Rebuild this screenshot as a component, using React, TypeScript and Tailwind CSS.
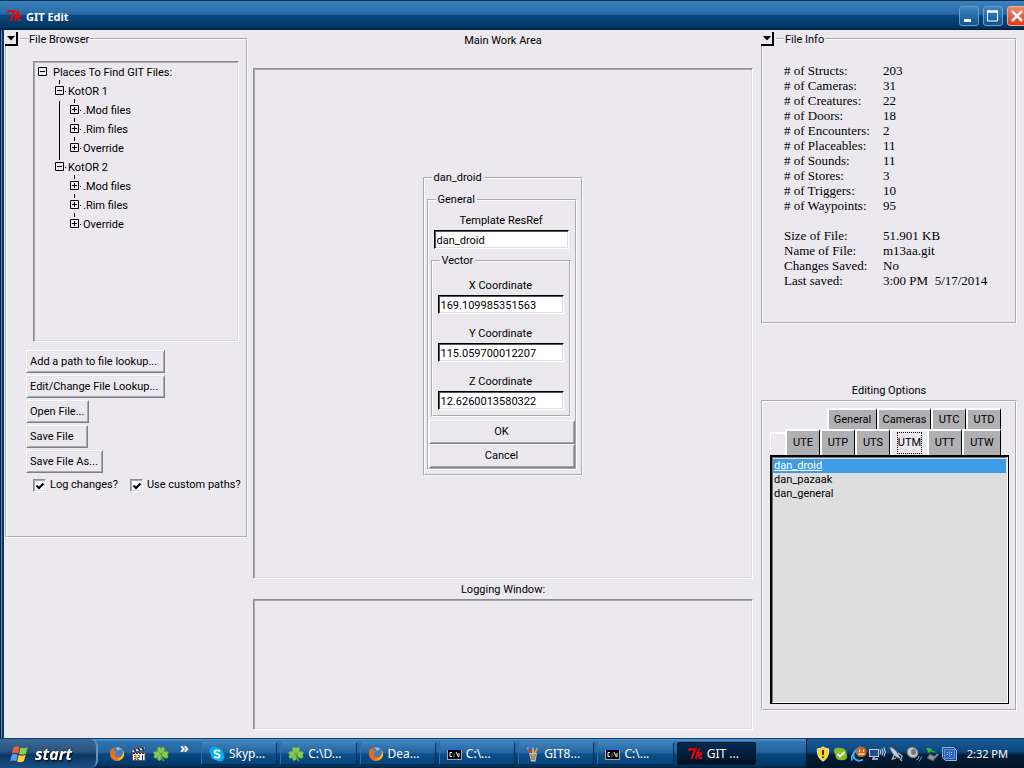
import { useState } from "react";
import type { ReactNode } from "react";

const sunken =
  "border border-t-[#8d8c92] border-l-[#8d8c92] border-r-white border-b-white shadow-[inset_1px_1px_#a9a8ad,inset_-1px_-1px_#dddce1]";
const raised =
  "border border-t-white border-l-white border-r-[#7f8186] border-b-[#7f8186] bg-[#ebe9ed] shadow-[inset_1px_1px_#e0e3e8,inset_-1px_-1px_#a9a8ad] active:border-t-[#8d8c92] active:border-l-[#8d8c92]";
const groove = "border-2 border-white [border-style:groove]";

const fileTree = [
  { name: "KotOR 1", children: [".Mod files", ".Rim files", "Override"] },
  { name: "KotOR 2", children: [".Mod files", ".Rim files", "Override"] },
];

const fileInfo = [
  ["# of Structs:", "203"],
  ["# of Cameras:", "31"],
  ["# of Creatures:", "22"],
  ["# of Doors:", "18"],
  ["# of Encounters:", "2"],
  ["# of Placeables:", "11"],
  ["# of Sounds:", "11"],
  ["# of Stores:", "3"],
  ["# of Triggers:", "10"],
  ["# of Waypoints:", "95"],
  ["", ""],
  ["Size of File:", "51.901 KB"],
  ["Name of File:", "m13aa.git"],
  ["Changes Saved:", "No"],
  ["Last saved:", "3:00 PM  5/17/2014"],
];

const FeatherIcon = () => (
  <svg width="15" height="12" viewBox="0 0 15 12" fill="none" stroke="#f00" className="shrink-0">
    <path d="M0.500 3 1.500 1.200H7.500C6 4 4.500 7 3.500 11" strokeWidth="1.900" />
    <path d="M11.500 0.500C10 3.500 8.500 7.500 7.800 11" strokeWidth="1.700" />
    <path d="M9 7.500c2-3 4.500-3.500 4.500-2S11 7.500 10 7.500c1 .5 1 2.500 2 3 .8.300 1.500-.5 2-1.500" strokeWidth="1.300" />
  </svg>
);

const SkypeIcon = () => (
  <svg width="16" height="16" viewBox="0 0 16 16" className="shrink-0">
    <circle cx="5" cy="5" r="4.500" fill="#00aff0" />
    <circle cx="11" cy="11" r="4.500" fill="#00aff0" />
    <circle cx="8" cy="8" r="6.500" fill="#00aff0" />
    <path d="M10.800 5.400C9.500 3.800 5.500 4 5.500 6c0 2.400 5.200 1.400 5.200 3.900 0 2.200-4.200 2.300-5.500.5" fill="none" stroke="#fff" strokeWidth="1.900" />
  </svg>
);

const CloverIcon = () => (
  <svg width="16" height="16" viewBox="0 0 16 16" className="shrink-0">
    <path d="M8 8c0 3 1 5 3 7" stroke="#5d9f2f" strokeWidth="1.600" fill="none" />
    <g fill="#86c850" stroke="#5fa636" strokeWidth="0.500">
      <path d="M8 7.500C4.500 6.500 3.500 3.500 5 1.500c1.500-1 2.500 0 3 1 .5-1 1.700-2 3-1 1.500 2 .5 5-3 6z" />
      <path d="M7.500 8C6 5 3 4.500 1 6c-1 1.500 0 2.200.8 2.700C.8 9.300.5 10.700 1.500 12c2.500 1 5-1 6-4z" />
      <path d="M8.500 8C10 5 13 4.500 15 6c1 1.500 0 2.200-.8 2.700 1 .6 1.300 2 .3 3.300-2.500 1-5-1-6-4z" />
      <path d="M8 8c-3 1-4 3.500-3 6 1.200 1 2.400.4 3-.5z" />
    </g>
  </svg>
);

const FirefoxIcon = () => (
  <svg width="16" height="16" viewBox="0 0 16 16" className="shrink-0">
    <circle cx="8" cy="8" r="7" fill="#e8701a" />
    <circle cx="9" cy="6.500" r="5" fill="#3c7fc4" />
    <path d="M7 2c2-1 5 0 6 2-2-1-3 0-4 1z" fill="#8fc3ec" />
    <path d="M1.500 3C.5 8 2 14 8 15c4 0 7-3 7-7 0-1-.3-3-1-4 .3 4-1 7-5 7-3 0-4-2-3-4l2-1C7 4.500 5 5 4.500 5 4 4 4 3 4.500 2 3.500 2.500 3 3 2.500 4z" fill="#e8701a" />
    <path d="M14 5c.5 4-2 8-6 8 3 2 7-1 7-5 0-1-.5-2.500-1-3z" fill="#fbc62f" />
  </svg>
);

const ConsoleIcon = () => (
  <svg width="15" height="12" viewBox="0 0 15 12" className="shrink-0">
    <rect width="15" height="12" fill="#9aa5b3" />
    <rect width="15" height="2" fill="#2b6ad0" />
    <rect x="1" y="2" width="13" height="9" fill="#000" />
    <path d="M5 4.500H3v4h2M7 5.500v1M7 7.500v1M9 4l2.500 5M12 5v3.500" stroke="#fff" fill="none" />
  </svg>
);

const BrushesIcon = () => (
  <svg width="14" height="16" viewBox="0 0 14 16" className="shrink-0">
    <path d="M5 9 2 2" stroke="#d5402b" strokeWidth="2" />
    <path d="M7 9V2" stroke="#e9a63a" strokeWidth="2" />
    <path d="m8 9 3.500-7" stroke="#c79a55" strokeWidth="2" />
    <path d="M1 3.500 2.500 1M7 1v2" stroke="#5aa0e8" strokeWidth="2" />
    <path d="M3 7h8l-1.500 8.500H5z" fill="#b9cbd8" />
    <path d="M5 8l1 6M9 8l-1 6" stroke="#c46a3a" strokeWidth="1.500" />
    <path d="M7 8v6" stroke="#6f9a3e" />
  </svg>
);

const ClapperIcon = () => (
  <svg width="14" height="14" viewBox="0 0 14 14" className="shrink-0">
    <path d="M0 3 13 0v2.500L0 5.500z" fill="#fff" stroke="#222" strokeWidth="0.600" />
    <path d="m2 2.500 2 2M6 1.500l2 2M10 .7l2 2" stroke="#111" strokeWidth="1.500" />
    <rect x="0.500" y="5.500" width="12.500" height="8" fill="#fff" stroke="#555" />
    <path d="M1 6.500h12" stroke="#222" strokeDasharray="2 1" />
    <path d="M2 8.500h2v4H2M2 10.500h2" stroke="#d22" fill="none" />
    <path d="M5.500 8.500h2V10.500h-2v2h2" stroke="#282" fill="none" />
    <path d="M10.500 8v5" stroke="#22c" />
  </svg>
);

const WindowsLogo = () => (
  <svg width="19" height="18" viewBox="0 0 19 18" className="shrink-0">
    <path d="M3.500 2.500C5.500 1 7.500 1 9.500 2L8 8.500C6 7.500 4 7.500 2 8.500z" fill="#f0622d" />
    <path d="M10.500 2.500c2 1 4.500 1 7-.5L16 8.500c-2.500 1.500-4.500 1.500-7 .5z" fill="#8fd04a" />
    <path d="M1.700 9.700c2-1 4-1 6 0l-1.500 6.500c-2-1-4-1-6 0z" fill="#5a9bf5" />
    <path d="M8.700 10c2.500 1 4.500 1 7-.5L14 16c-2.500 1.500-4.500 1.500-7 .500z" fill="#fbd335" />
  </svg>
);

const TrayIcons = () => (
  <div className="flex items-center gap-[2px]">
    <svg width="16" height="16" viewBox="0 0 16 16">
      <path d="M8 .8C6 2.300 4 2.800 2.300 2.800c0 6 1 9.500 5.700 12.400 4.700-2.900 5.700-6.400 5.700-12.400C12 2.800 10 2.300 8 .8z" fill="#f9d423" stroke="#e9e9dd" />
      <path d="M8 4v5M8 10.500V12" stroke="#222" strokeWidth="1.800" />
    </svg>
    <svg width="16" height="16" viewBox="0 0 16 16">
      <path d="M1 5c0-3 3-4.500 6-3 4-.5 7 2.500 6.500 6 2 3-.5 7-4.500 6-4 1-7-2-6.500-5.500C1.500 7.500 1 6 1 5z" fill="#84bd27" />
      <path d="m4.500 8 2.500 2.500L11.500 6" stroke="#fff" strokeWidth="1.900" fill="none" />
    </svg>
    <svg width="16" height="16" viewBox="0 0 16 16">
      <path d="M12 13.500C8 16 2.500 14 2.500 9.500 2.500 6 5 4 7 4M1 14.500C-.5 11 4 3 10 1" fill="none" stroke="#35aef0" strokeWidth="2" />
      <rect x="5" y="1" width="10.500" height="10" rx="4.500" fill="#c9621c" />
      <path d="M8.500 3.500V6M12.500 3.500V6M7.500 8h6" stroke="#f8e3c8" strokeWidth="1.300" />
    </svg>
    <svg width="17" height="16" viewBox="0 0 17 16">
      <rect x="0.500" y="3.500" width="9" height="7" fill="#2a4a8c" stroke="#b9c7df" />
      <path d="M3 13h6M5 11v2" stroke="#b9c7df" strokeWidth="1.500" />
      <path d="M11 3.500q1.500 2.500 0 5M13 2.500q2 3.500 0 7M15 1.500q2.500 4.500 0 9" stroke="#dfe6f2" fill="none" />
    </svg>
    <svg width="16" height="16" viewBox="0 0 16 16">
      <path d="M1.500 1C5 1.500 8 4 10 8l3 5-4-1.500C6 9.500 3 6 1.500 1z" fill="#c9ced5" stroke="#5b6471" strokeWidth="0.600" />
      <path d="m6 9-1.500 4L8 12M10 7l4 3-.5 3M12 13l2 2" stroke="#b5bcc5" strokeWidth="1.300" fill="none" />
    </svg>
    <svg width="16" height="16" viewBox="0 0 16 16">
      <ellipse cx="6.500" cy="6.500" rx="5.500" ry="4.800" transform="rotate(35 6.500 6.500)" fill="#c9c9c9" stroke="#8a8a8a" />
      <ellipse cx="7.500" cy="6" rx="2.500" ry="3" fill="#7a7a7a" />
      <path d="M10 14q3-1 3-4M12.500 15.500q3-2 3-5" stroke="#7f95d2" fill="none" />
    </svg>
    <svg width="16" height="16" viewBox="0 0 16 16">
      <path d="m6 8 6 3-3 4-6-3z" fill="#8d949b" stroke="#4b535b" />
      <path d="m11 11 3-3" stroke="#8a9096" strokeWidth="2" />
      <path d="M13 6C10 7 8 6 7 5L5 7.500 2 2l6 .5-1 1C8.500 5 10.500 6 13 6z" fill="#2fc235" />
    </svg>
    <svg width="16" height="16" viewBox="0 0 16 16">
      <path d="M0.500 1.500h11l3 3v10h-11l-3-3z" fill="#1d4f9c" stroke="#8fb4e6" />
      <path d="M2.500 3.500h10v9h-10z" fill="#2b65b5" stroke="#5f90d2" />
      <path d="M5.500 6v4M7.500 5.500v5M9.500 6v4" stroke="#b8d3f5" strokeDasharray="1 1" />
    </svg>
  </div>
);

const tasks = [
  { icon: <SkypeIcon />, label: "Skyp..." },
  { icon: <CloverIcon />, label: "C:\\D..." },
  { icon: <FirefoxIcon />, label: "Dea..." },
  { icon: <ConsoleIcon />, label: "C:\\..." },
  { icon: <BrushesIcon />, label: "GIT8..." },
  { icon: <ConsoleIcon />, label: "C:\\..." },
  { icon: <FeatherIcon />, label: "GIT ...", active: true },
];

const TitleBar = () => (
  <header className="flex h-[30px] items-center justify-between overflow-hidden border-t border-[#062c50] bg-[linear-gradient(#3a83bd,#2a6aa5_45%,#064a84_50%,#02365f_90%,#011f3a)] pl-[7px]">
    <div className="flex items-center gap-1">
      <FeatherIcon />
      <h1 className="pt-[2px] font-['Noto_Sans'] text-[11px] font-bold text-white">GIT Edit</h1>
    </div>
    <div className="-mr-[3px] flex gap-1">
      <button aria-label="Minimize" className="h-5 w-5 rounded-[3px] border border-[#6a9fcb] bg-[linear-gradient(#3f86c0,#0f5490)]">
        <svg width="18" height="18" viewBox="0 0 18 18"><path d="M4 13.500h7" stroke="#fff" strokeWidth="3" /></svg>
      </button>
      <button aria-label="Maximize" className="h-5 w-5 rounded-[3px] border border-[#6a9fcb] bg-[linear-gradient(#3f86c0,#0f5490)]">
        <svg width="18" height="18" viewBox="0 0 18 18"><path d="M3.500 4v10h10V4" stroke="#fff" fill="none" /><path d="M3 4.500h11" stroke="#fff" strokeWidth="2.500" /></svg>
      </button>
      <button aria-label="Close" className="h-5 w-5 rounded-[3px] border border-[#f3a993] bg-[linear-gradient(#ee8a6a,#dc3c18)]">
        <svg width="18" height="18" viewBox="0 0 18 18"><path d="m4 4 10 10M14 4 4 14" stroke="#fff" strokeWidth="2.500" /></svg>
      </button>
    </div>
  </header>
);

// Group box with the little drop-down arrow in its top left corner
const CollapsiblePanel = ({ title, children }: { title: string; children: ReactNode }) => (
  <fieldset className={groove}>
    <legend className="-ml-[2px] flex h-[14px] items-center">
      <button aria-label={`Toggle ${title}`} className="flex h-[14px] w-[13px] items-center justify-center border-r-2 border-b-2 border-black bg-[#ebe9ed]">
        <svg width="8" height="5" viewBox="0 0 8 5"><path d="M0 0h8L4 4.500z" /></svg>
      </button>
      <span className="ml-[2px] h-[2px] w-2 border-t border-b border-t-[#b1b0b4] border-b-white" />
      <span className="px-[1px] pt-[2px]">{title}</span>
    </legend>
    {children}
  </fieldset>
);

const Expander = ({ open, linked }: { open: boolean; linked?: boolean }) => (
  <svg width="11" height="19" viewBox="0 0 11 19" fill="none" stroke="#000" className="shrink-0 overflow-visible">
    {linked && <path d="M4.500 -2V2M10 9.500h1" />}
    <path d="M0.500 4.500h8v8h-8zM2 8.500h5" />
    {!open && <path d="M4.500 6v5" />}
  </svg>
);

const FileTree = () => {
  const [open, setOpen] = useState<Record<string, boolean>>({ "KotOR 1": true, "KotOR 2": true });

  return (
    <div className={`ml-[26px] mr-[7px] mt-[15px] h-[281px] pl-1 pt-px leading-4 ${sunken}`}>
      <div className="flex h-[19px] items-center gap-1">
        <Expander open />
        <span className="pt-px">Places To Find GIT Files:</span>
      </div>
      <ul className="pl-[17px]">
        {fileTree.map((node, i) => (
          <li key={node.name}>
            <button
              className="flex h-[19px] items-center gap-[2px]"
              onClick={() => setOpen({ ...open, [node.name]: !open[node.name] })}
            >
              <Expander open={open[node.name]} linked />
              <span className="pt-px">{node.name}</span>
            </button>
            {open[node.name] && (
              <ul className={`ml-1 border-l pl-[10px] ${i === 0 ? "border-black" : "border-transparent"}`}>
                {node.children.map((child) => (
                  <li key={child}>
                    <button className="flex h-[19px] items-center gap-[2px]">
                      <Expander open={false} linked />
                      <span className="pt-px">{child}</span>
                    </button>
                  </li>
                ))}
              </ul>
            )}
          </li>
        ))}
      </ul>
    </div>
  );
};

const CheckBox = ({ label }: { label: string }) => (
  <label className="flex items-center gap-1">
    <span className="relative flex">
      <input type="checkbox" defaultChecked className={`peer h-[13px] w-[13px] appearance-none bg-white ${sunken}`} />
      <svg width="8" height="8" viewBox="0 0 8 8" className="pointer-events-none absolute left-[3px] top-[3px] hidden peer-checked:block">
        <path d="M0.500 3.500 3 6l4.500-4.500" stroke="#000" strokeWidth="2.200" fill="none" />
      </svg>
    </span>
    {label}
  </label>
);

const FileBrowser = () => (
  <CollapsiblePanel title="File Browser">
    <FileTree />
    <div className="ml-[19px] mt-2 flex flex-col items-start gap-[2px]">
      <button className={`h-[23px] w-[139px] px-[3px] pt-px text-left ${raised}`}>Add a path to file lookup...</button>
      <button className={`h-[23px] w-[139px] px-[3px] pt-px text-left ${raised}`}>Edit/Change File Lookup...</button>
      <button className={`h-[23px] w-[63px] px-[3px] pt-px text-left ${raised}`}>Open File...</button>
      <button className={`h-[23px] w-[62px] px-[3px] pt-px text-left ${raised}`}>Save File</button>
      <button className={`h-[23px] w-[77px] px-[3px] pt-px text-left ${raised}`}>Save File As...</button>
    </div>
    <div className="mb-[44px] ml-[26px] mt-[5px] flex gap-3">
      <CheckBox label="Log changes?" />
      <CheckBox label="Use custom paths?" />
    </div>
  </CollapsiblePanel>
);

const Field = ({ label, value }: { label: string; value: string }) => (
  <label className="flex flex-col">
    <span className="text-center leading-[18px]">{label}</span>
    <input
      defaultValue={value}
      className="h-[19px] w-full border border-t-black border-l-black border-r-white border-b-white bg-white px-[2px] pt-px shadow-[inset_1px_1px_#555,inset_-1px_-1px_#dedede]"
    />
  </label>
);

const ResourceForm = () => (
  <form className="mr-px w-40" onSubmit={(e) => e.preventDefault()}>
    <fieldset className={`pb-1 pl-[2px] pr-1 ${groove}`}>
      <legend className="ml-[5px] px-[2px] leading-[14px]">dan_droid</legend>
      <fieldset className={`mt-2 ${groove}`}>
        <legend className="ml-[7px] px-[2px] leading-[14px]">General</legend>
        <div className="ml-[5px] mr-[6px] mt-[5px]">
          <Field label="Template ResRef" value="dan_droid" />
        </div>
        <fieldset className={`ml-[2px] mr-[4px] mt-[5px] px-[5px] pb-[5px] ${groove}`}>
          <legend className="ml-[2px] px-[2px] leading-[14px]">Vector</legend>
          <div className="mt-[9px] flex flex-col gap-[11px]">
            <Field label="X Coordinate" value="169.109985351563" />
            <Field label="Y Coordinate" value="115.059700012207" />
            <Field label="Z Coordinate" value="12.6260013580322" />
          </div>
        </fieldset>
        <div className="mt-[3px] flex flex-col">
          <button type="submit" className={`h-6 ${raised}`}>OK</button>
          <button type="button" className={`h-6 ${raised}`}>Cancel</button>
        </div>
      </fieldset>
    </fieldset>
  </form>
);

const FileInfo = () => (
  <CollapsiblePanel title="File Info">
    <table className="mb-[34px] ml-[21px] mt-[17px] font-['Liberation_Serif'] text-[13px] leading-[15px]">
      <tbody>
        {fileInfo.map(([name, value], i) => (
          <tr key={i} className="h-[15px]">
            <th scope="row" className="w-[99px] p-0 text-left font-normal">{name}</th>
            <td className="whitespace-pre p-0">{value}</td>
          </tr>
        ))}
      </tbody>
    </table>
  </CollapsiblePanel>
);

const Tab = ({ name, width, active, onClick }: { name: string; width: string; active: boolean; onClick: () => void }) => (
  <button
    role="tab"
    aria-selected={active}
    onClick={onClick}
    className={`flex items-center justify-center border-t-2 border-l-2 border-white ${width} ${
      active ? "bg-[#ebe9ed]" : "border-r border-r-black bg-[#b0afb1]"
    }`}
  >
    {active ? <span className="border border-dotted border-black py-[3px]">{name}</span> : name}
  </button>
);

const EditingOptions = () => {
  const [tab, setTab] = useState("UTM");
  const [selected, setSelected] = useState("dan_droid");

  const topTabs = [
    ["General", "w-[50px]"],
    ["Cameras", "w-[54px]"],
    ["UTC", "w-[35px]"],
    ["UTD", "w-[35px]"],
  ];
  const bottomTabs = [
    ["UTE", "w-[35px]"],
    ["UTP", "w-[35px]"],
    ["UTS", "w-[35px]"],
    ["UTM", "w-[37px]"],
    ["UTT", "w-[35px]"],
    ["UTW", "w-[39px]"],
  ];

  return (
    <section>
      <h2 className="h-5 text-center leading-[22px]">Editing Options</h2>
      <div className={`pb-[5px] pl-[7px] pr-[6px] pt-[6px] ${groove}`}>
        <div role="tablist" className="pr-2">
          <div className="flex h-[21px] justify-end">
            {topTabs.map(([name, width]) => (
              <Tab key={name} name={name} width={width} active={tab === name} onClick={() => setTab(name)} />
            ))}
          </div>
          <div className="flex h-[26px] justify-end">
            <span className="mt-[3px] flex-1 border-t-2 border-l border-white" />
            {bottomTabs.map(([name, width]) => (
              <Tab key={name} name={name} width={width} active={tab === name} onClick={() => setTab(name)} />
            ))}
          </div>
        </div>
        <ul
          role="listbox"
          aria-label="Resources"
          className="h-[249px] border-2 border-r border-b border-black bg-[#dedede] pl-px pr-[2px] pt-[2px] leading-[14px] shadow-[inset_-1px_-1px_#fff,inset_1px_1px_#777]"
        >
          {["dan_droid", "dan_pazaak", "dan_general"].map((item) => (
            <li
              key={item}
              role="option"
              aria-selected={selected === item}
              onClick={() => setSelected(item)}
              className={`px-px ${selected === item ? "bg-[#3d9ce8] text-white underline" : ""}`}
            >
              {item}
            </li>
          ))}
        </ul>
      </div>
    </section>
  );
};

const Taskbar = () => (
  <footer className="flex h-[30px] overflow-hidden border-t border-[#0a3d6c] bg-[linear-gradient(#5b97c9,#2d72ae_10%,#25659f_45%,#05477f_52%,#023866_90%,#01203b)] font-['Noto_Sans'] text-[11px] text-white">
    <button className="flex w-[98px] items-center gap-[6px] rounded-r-lg border-r-2 border-[#5f93bf] bg-[linear-gradient(#3b6a96,#27527d_45%,#0a3560_55%,#1b4f82)] pl-[10px]">
      <WindowsLogo />
      <span className="text-[16px] font-bold italic leading-none drop-shadow-[1px_1px_1px_#000]">start</span>
    </button>
    <div className="flex w-[103px] items-center gap-[7px] pl-[11px]">
      <FirefoxIcon />
      <ClapperIcon />
      <CloverIcon />
      <span className="mb-3 ml-1 text-[14px] font-bold leading-none">»</span>
    </div>
    <div className="flex flex-1 gap-[3px] py-[3px] pr-[50px]">
      {tasks.map((task, i) => (
        <button
          key={i}
          className={`flex flex-1 items-center gap-1 rounded-[2px] border pl-[7px] ${
            task.active
              ? "border-[#01162b] bg-[linear-gradient(#042a50,#02203f_50%,#010f20)] pl-[10px]"
              : "border-t-[#4b8bc2] border-l-[#2f70a8] border-r-[#022f57] border-b-[#02294c] bg-[linear-gradient(#3a80bb,#24649f_45%,#0a4e89_55%,#07447b)]"
          }`}
        >
          {task.icon}
          <span className="text-[12px]">{task.label}</span>
        </button>
      ))}
    </div>
    <div className="flex w-[218px] items-center justify-between border-l border-[#011a30] bg-[linear-gradient(#1a5a96,#0b477e_45%,#021d36_55%,#011528)] pl-2 pr-4">
      <TrayIcons />
      <time>2:32 PM</time>
    </div>
  </footer>
);

const App = () => (
  <div className="flex min-h-screen flex-col bg-[#ebe9ed] font-['Roboto'] text-[11px] leading-[14px] text-black">
    <TitleBar />
    <main className="grid flex-1 grid-cols-[243px_1fr_256px] pl-[5px] pr-[7px] shadow-[inset_1px_0_#011a30,inset_2px_0_#4a8ec4,inset_4px_0_#053a66]">
      <div className="pt-[2px]">
        <FileBrowser />
      </div>
      <div className="flex flex-col pb-2 pl-[5px] pr-2">
        <h2 className="mb-[18px] h-5 text-center leading-[22px]">Main Work Area</h2>
        <section className={`flex flex-1 items-center justify-center ${sunken}`}>
          <ResourceForm />
        </section>
        <h2 className="h-5 text-center leading-[22px]">Logging Window:</h2>
        <section aria-label="Log" className={`h-[131px] ${sunken}`} />
      </div>
      <div className="flex flex-col justify-between pb-[27px] pt-[2px]">
        <FileInfo />
        <EditingOptions />
      </div>
    </main>
    <Taskbar />
  </div>
);

export default App;
